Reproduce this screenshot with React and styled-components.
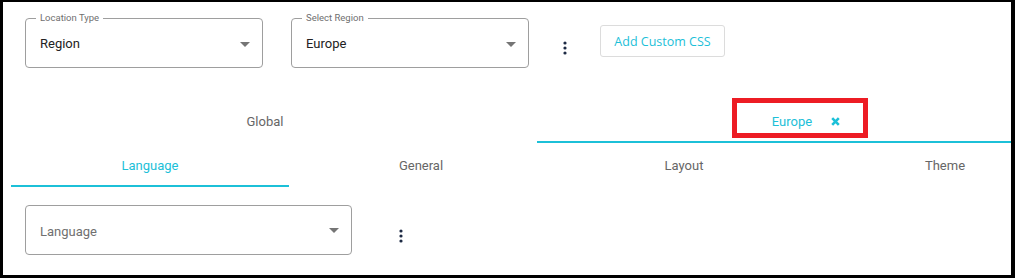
import React from 'react'
import styled, { createGlobalStyle } from 'styled-components'

const GlobalStyle = createGlobalStyle`
  html, body {
    margin: 0;
    padding: 0;
    background: #fff;
  }
  body {
    font-family: Roboto, "Liberation Sans", Arial, sans-serif;
  }
`;

const CYAN = '#1cc0d8';

const StyledFrame = styled.div`
  box-sizing: border-box;
  width: 1015px;
  height: 278px;
  border-style: solid;
  border-color: #000;
  border-width: 2px 4px 3px 3px;
  overflow: hidden;
  background: #fff;
`;

const StyledToolbar = styled.div`
  display: flex;
  align-items: flex-start;
  padding: 16px 0 0 22px;
`;

const StyledField = styled.div`
  position: relative;
  box-sizing: border-box;
  width: ${({ width }) => width}px;
  height: 50px;
  border: 1px solid #9e9e9e;
  border-radius: 4px;
  display: flex;
  align-items: center;
  justify-content: space-between;
  padding: 0 12px 0 14px;
  margin-right: ${({ gap }) => gap}px;
`;

const StyledLegend = styled.span`
  position: absolute;
  top: -7px;
  left: 10px;
  padding: 0 4px;
  background: #fff;
  font-size: 9.5px;
  line-height: 12px;
  color: #6f6f6f;
`;

const StyledValue = styled.span`
  font-size: 13px;
  color: ${({ placeholder }) => (placeholder ? '#707070' : '#222')};
  padding-top: ${({ placeholder }) => (placeholder ? 3 : 1)}px;
`;

const StyledArrow = styled.span`
  width: 0;
  height: 0;
  border-left: 5px solid transparent;
  border-right: 5px solid transparent;
  border-top: 5px solid #757575;
  margin-top: ${({ low }) => (low ? 0 : 2)}px;
`;

const StyledKebab = styled.span`
  display: flex;
  margin-top: ${({ top }) => top}px;
  margin-right: ${({ gap }) => gap || 0}px;
`;

const StyledButton = styled.button`
  box-sizing: border-box;
  width: 125px;
  height: 32px;
  margin-top: 7px;
  padding: 0;
  border: 1px solid #dcdcdc;
  border-radius: 3px;
  background: #fff;
  color: ${CYAN};
  font-family: "Open Sans", "Liberation Sans", sans-serif;
  font-size: 12.5px;
  cursor: pointer;
`;

const StyledTabs = styled.div`
  display: flex;
  margin-top: ${({ top }) => top || 0}px;
  padding-left: 8px;
`;

const StyledTab = styled.div`
  position: relative;
  flex: 0 0 ${({ width }) => width}px;
  box-sizing: border-box;
  height: 44px;
  display: flex;
  align-items: center;
  justify-content: center;
  gap: 19px;
  padding-top: 2px;
  padding-right: ${({ shift }) => shift || 0}px;
  font-size: 13px;
  color: ${({ active }) => (active ? CYAN : '#666')};
  border-bottom: 2px solid ${({ active }) => (active ? CYAN : 'transparent')};
`;

const StyledHighlight = styled.div`
  position: absolute;
  left: 195px;
  top: -1px;
  width: 136px;
  height: 40px;
  box-sizing: border-box;
  border: 5px solid #ed1c24;
`;

const StyledFieldRow = styled.div`
  display: flex;
  align-items: flex-start;
  padding: 18px 0 0 22px;
`;

const Kebab = ({ top, gap }) => (
  <StyledKebab top={top} gap={gap}>
    <svg width="4" height="14" viewBox="0 0 4 14">
      <circle cx="2" cy="2" r="1.6" fill="#1d2a44" />
      <circle cx="2" cy="7" r="1.6" fill="#1d2a44" />
      <circle cx="2" cy="12" r="1.6" fill="#1d2a44" />
    </svg>
  </StyledKebab>
);

const CloseIcon = () => (
  <svg width="9" height="9" viewBox="0 0 9 9">
    <path d="M1.2 1.2 L7.8 7.8 M7.8 1.2 L1.2 7.8" stroke={CYAN} strokeWidth="2.6" />
  </svg>
);

const App = () => {
  return (
    <>
      <GlobalStyle />
      <StyledFrame>
        <StyledToolbar>
          <StyledField width={238} gap={28}>
            <StyledLegend>Location Type</StyledLegend>
            <StyledValue>Region</StyledValue>
            <StyledArrow />
          </StyledField>
          <StyledField width={238} gap={34}>
            <StyledLegend>Select Region</StyledLegend>
            <StyledValue>Europe</StyledValue>
            <StyledArrow />
          </StyledField>
          <Kebab top={23} gap={33} />
          <StyledButton>Add Custom CSS</StyledButton>
        </StyledToolbar>

        <StyledTabs top={31}>
          <StyledTab width={526} shift={18}>Global</StyledTab>
          <StyledTab width={538} active>
            Europe
            <CloseIcon />
            <StyledHighlight />
          </StyledTab>
        </StyledTabs>

        <StyledTabs>
          <StyledTab width={278} active>Language</StyledTab>
          <StyledTab width={264}>General</StyledTab>
          <StyledTab width={262}>Layout</StyledTab>
          <StyledTab width={260}>Theme</StyledTab>
        </StyledTabs>

        <StyledFieldRow>
          <StyledField width={327} gap={47}>
            <StyledValue placeholder="true">Language</StyledValue>
            <StyledArrow low />
          </StyledField>
          <Kebab top={24} />
        </StyledFieldRow>
      </StyledFrame>
    </>
  );
}

export default App;
